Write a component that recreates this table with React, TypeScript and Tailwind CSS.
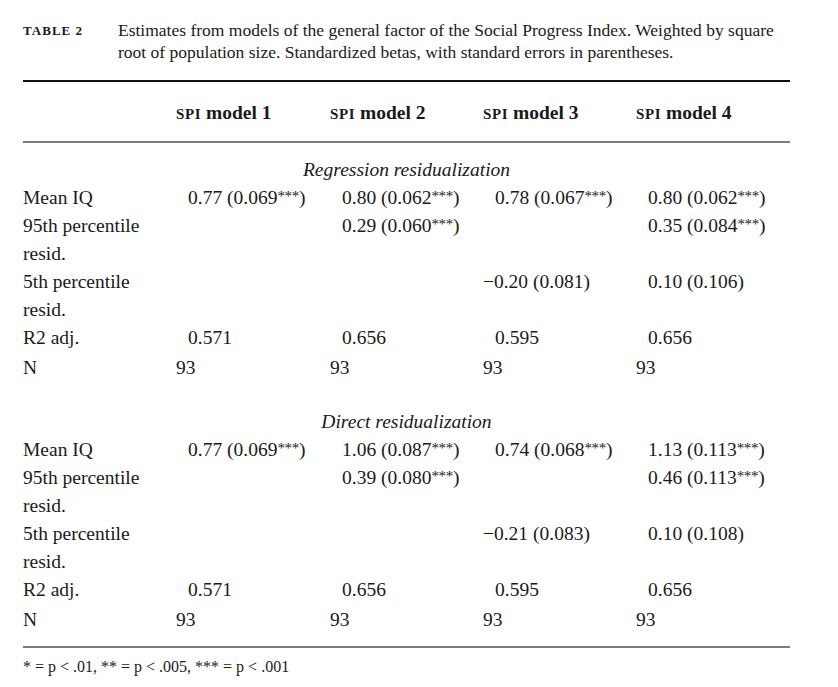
import React from "react";

type Cell = { v: string; se?: string; stars?: boolean; neg?: boolean; plain?: boolean } | null;

type Row = { label: string; cells: Cell[]; n?: boolean };

const Val = ({ c }: { c: Cell }) => {
  if (!c) return <div />;
  if (c.plain) return <div className="whitespace-nowrap">{c.v}</div>;
  return (
    <div className={"whitespace-nowrap " + (c.neg ? "pl-0" : "pl-[12px]")}>
      {c.v}
      {c.se !== undefined && (
        <>
          {" ("}
          {c.se}
          {c.stars && <span className="text-[15px] relative top-[-3px] tracking-[-0.02em]">***</span>}
          {")"}
        </>
      )}
    </div>
  );
};

const s1: Row[] = [
  {
    label: "Mean IQ",
    cells: [
      { v: "0.77", se: "0.069", stars: true },
      { v: "0.80", se: "0.062", stars: true },
      { v: "0.78", se: "0.067", stars: true },
      { v: "0.80", se: "0.062", stars: true },
    ],
  },
  {
    label: "95th percentile",
    cells: [null, { v: "0.29", se: "0.060", stars: true }, null, { v: "0.35", se: "0.084", stars: true }],
  },
  { label: "resid.", cells: [null, null, null, null] },
  {
    label: "5th percentile",
    cells: [null, null, { v: "\u22120.20", se: "0.081", neg: true }, { v: "0.10", se: "0.106" }],
  },
  { label: "resid.", cells: [null, null, null, null] },
  { label: "R2 adj.", cells: [{ v: "0.571" }, { v: "0.656" }, { v: "0.595" }, { v: "0.656" }] },
  { label: "N", n: true, cells: [{ v: "93", plain: true }, { v: "93", plain: true }, { v: "93", plain: true }, { v: "93", plain: true }] },
];

const s2: Row[] = [
  {
    label: "Mean IQ",
    cells: [
      { v: "0.77", se: "0.069", stars: true },
      { v: "1.06", se: "0.087", stars: true },
      { v: "0.74", se: "0.068", stars: true },
      { v: "1.13", se: "0.113", stars: true },
    ],
  },
  {
    label: "95th percentile",
    cells: [null, { v: "0.39", se: "0.080", stars: true }, null, { v: "0.46", se: "0.113", stars: true }],
  },
  { label: "resid.", cells: [null, null, null, null] },
  {
    label: "5th percentile",
    cells: [null, null, { v: "\u22120.21", se: "0.083", neg: true }, { v: "0.10", se: "0.108" }],
  },
  { label: "resid.", cells: [null, null, null, null] },
  { label: "R2 adj.", cells: [{ v: "0.571" }, { v: "0.656" }, { v: "0.595" }, { v: "0.656" }] },
  { label: "N", n: true, cells: [{ v: "93", plain: true }, { v: "93", plain: true }, { v: "93", plain: true }, { v: "93", plain: true }] },
];

const grid = "grid grid-cols-[153px_154px_153px_153px_154px]";

const Section = ({ title, rows }: { title: string; rows: Row[] }) => (
  <div>
    <div className="h-[28px] leading-[28px] text-center italic">{title}</div>
    {rows.map((r, i) => (
      <div key={i} className={grid + " h-[28px] leading-[28px] " + (r.n ? "mt-[2px]" : "")}>
        <div className="whitespace-nowrap">{r.label}</div>
        {r.cells.map((c, j) => (
          <Val key={j} c={c} />
        ))}
      </div>
    ))}
  </div>
);

export default function App() {
  return (
    <div
      className="w-[838px] h-[687px] bg-white text-[#1a1a1a] px-[23px] pt-[19px]"
      style={{ fontFamily: '"Liberation Serif", "Times New Roman", serif' }}
    >
      <div className="w-[767px]">
        <div className="flex">
          <div className="w-[95px] text-[13px] font-semibold tracking-[0.08em] leading-[22px] pt-[1px]">TABLE 2</div>
          <div className="text-[17.5px] leading-[22px] whitespace-nowrap">
            Estimates from models of the general factor of the Social Progress Index. Weighted by square
            <br />
            root of population size. Standardized betas, with standard errors in parentheses.
          </div>
        </div>
        <div className="mt-[17px] h-[1.5px] bg-[#111]" />
        <div className={grid + " h-[59px] items-center text-[19.5px] font-bold pt-[3px]"}>
          <div />
          {["1", "2", "3", "4"].map((n) => (
            <div key={n} className="whitespace-nowrap">
              <span className="text-[15px] tracking-[0.04em]">SPI</span> model {n}
            </div>
          ))}
        </div>
        <div className="h-[2px] bg-[#7d7d7d]" />
        <div className="text-[19.5px] pt-[13px]">
          <Section title="Regression residualization" rows={s1} />
          <div className="h-[26px]" />
          <Section title="Direct residualization" rows={s2} />
        </div>
        <div className="mt-[12px] h-[2px] bg-[#7d7d7d]" />
        <div className="mt-[9px] text-[16px] leading-[20px] whitespace-nowrap">
          * = p &lt; .01, ** = p &lt; .005, *** = p &lt; .001
        </div>
      </div>
    </div>
  );
}
